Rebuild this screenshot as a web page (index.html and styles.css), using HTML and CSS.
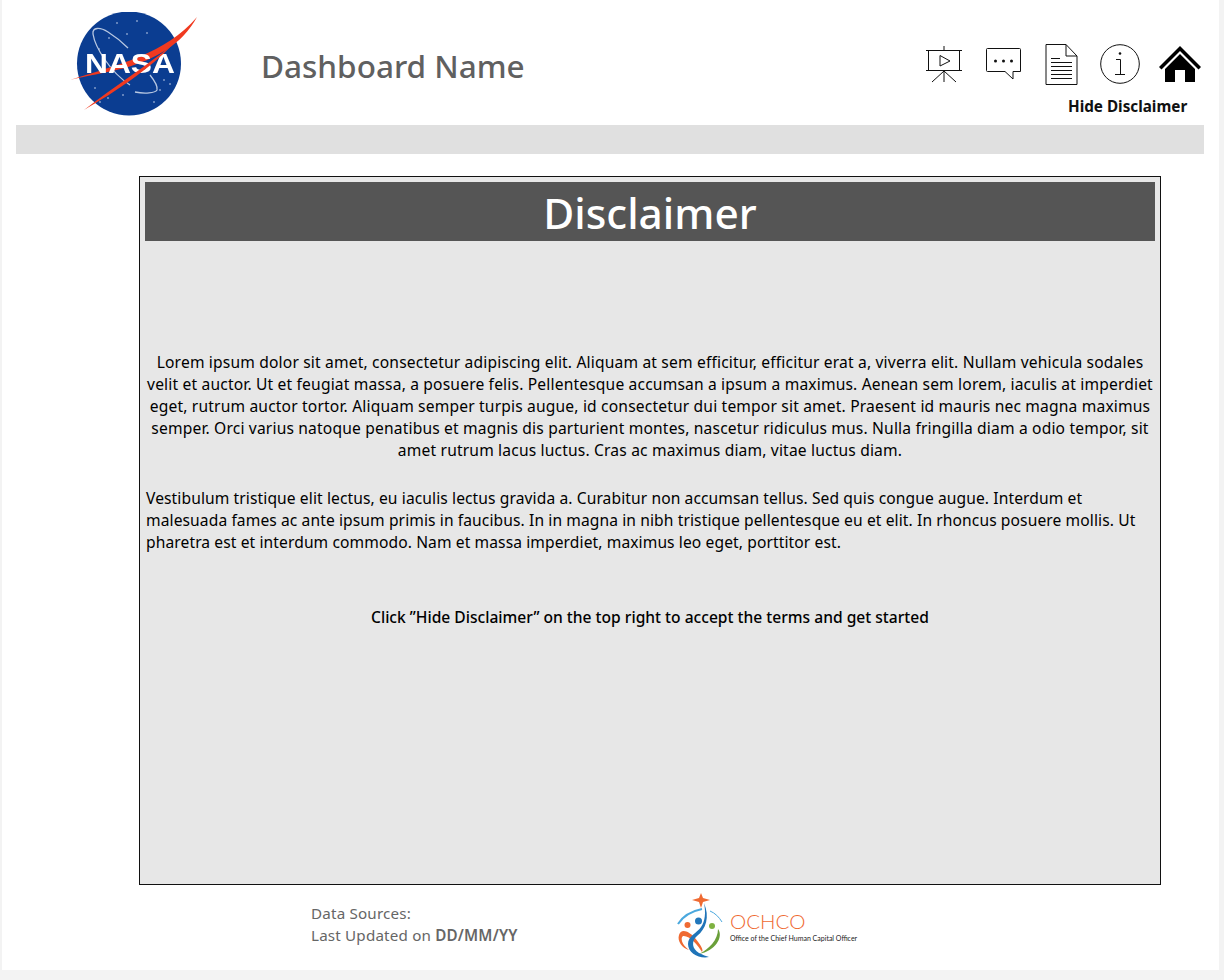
FILE: index.html
```html
<!DOCTYPE html>
<html lang="en">
<head>
  <meta charset="UTF-8">
  <meta name="viewport" content="width=device-width, initial-scale=1.0">
  <title>Dashboard Name</title>
  <link rel="stylesheet" href="styles.css">
</head>
<body>
  <div class="page">
    <header class="header">
      <svg class="nasa-logo" width="128" height="106" viewBox="0 0 128 106">
        <circle cx="59" cy="51.500" r="52" fill="#0b3d91"/>
        <g fill="#7f9aca">
          <circle cx="47" cy="11" r="1"/><circle cx="57" cy="22" r="1"/><circle cx="67" cy="9" r="1"/>
          <circle cx="77" cy="21" r="1"/><circle cx="39" cy="26" r="1"/><circle cx="29" cy="37" r="1"/>
          <circle cx="25" cy="76" r="1"/><circle cx="30" cy="90" r="1"/><circle cx="53" cy="83" r="1"/>
          <circle cx="94" cy="68" r="1"/><circle cx="100" cy="72" r="1"/><circle cx="84" cy="90" r="1"/>
          <circle cx="38" cy="86" r="1"/><circle cx="90" cy="78" r="1"/>
        </g>
        <path d="M60 73C40 60 25 35 23 22C22 15 30 15 38 20C46 25 52 30 58 36" fill="none" stroke="#b8c8e2" stroke-width="1.300"/>
        <path d="M65 80C75 82 85 81 87 78C88 74 84 68 80 63" fill="none" stroke="#b8c8e2" stroke-width="1.300"/>
        <path d="M0 68C50 52 95 42 127 5C112 33 85 47 55 56C35 61 15 64 0 68Z" fill="#f0391f"/>
        <text class="nasa-text" x="15" y="61" textLength="90" lengthAdjust="spacingAndGlyphs">NASA</text>
        <path d="M14 98C45 74 75 55 102 33C80 57 45 80 14 98Z" fill="#f0391f"/>
      </svg>
      <h1 class="dash-title">Dashboard Name</h1>
      <div class="header-right">
        <div class="icon-row">
          <svg class="icon-slides" width="38" height="38" viewBox="0 0 38 38" fill="none" stroke="#111" stroke-width="1">
            <path d="M1 5.500H37M3.500 5.500V25.500H34.500V5.500M1 25.500H37M19 1V5.500M19 25.500V37M19 26L7 37M19 26L31 37"/>
            <path d="M15 10.500L25 16 15 21Z"/>
          </svg>
          <svg class="icon-chat" width="37" height="32" viewBox="0 0 37 32" fill="none" stroke="#111" stroke-width="1">
            <path d="M2.500 .5H34.500Q35.500 .5 35.500 1.500V23.500H28V31L20 23.500H2.500Q1.500 23.500 1.500 22.500V1.500Q1.500 .5 2.500 .5Z"/>
            <g fill="#111" stroke="none"><circle cx="10.500" cy="13" r="1.500"/><circle cx="18.500" cy="13" r="1.500"/><circle cx="26.500" cy="13" r="1.500"/></g>
          </svg>
          <svg class="icon-doc" width="33" height="41" viewBox="0 0 33 41" fill="none" stroke="#111" stroke-width="1">
            <path d="M1 .5H21L32 12V40.500H1ZM21 .5V12H32"/>
            <path d="M6 14.500H15M6 18.500H27M6 22.500H27M6 26.500H27M6 30.500H27M6 34.500H27"/>
          </svg>
          <svg class="icon-info" width="40" height="40" viewBox="0 0 40 40" fill="none" stroke="#111" stroke-width="1">
            <circle cx="20" cy="20" r="19.300"/>
            <path d="M16 15.500H20.500V30M15 30.500H25"/>
            <circle cx="20" cy="9.500" r="1.300" fill="#111" stroke="none"/>
          </svg>
          <svg class="icon-home" width="42" height="37" viewBox="0 0 42 37">
            <path d="M21 0L42 21 39.500 23.500 21 5 2.500 23.500 0 21Z" fill="#000"/>
            <path d="M21 8L36 23V36H26V24H16V36H6V23Z" fill="#000"/>
          </svg>
        </div>
        <div class="hide-link">Hide Disclaimer</div>
      </div>
    </header>
    <div class="gray-bar"></div>

    <main class="panel">
      <h2 class="panel-title">Disclaimer</h2>
      <p class="lorem-center">Lorem ipsum dolor sit amet, consectetur adipiscing elit. Aliquam at sem efficitur, efficitur erat a, viverra elit. Nullam vehicula sodales velit et auctor. Ut et feugiat massa, a posuere felis. Pellentesque accumsan a ipsum a maximus. Aenean sem lorem, iaculis at imperdiet eget, rutrum auctor tortor. Aliquam semper turpis augue, id consectetur dui tempor sit amet. Praesent id mauris nec magna maximus semper. Orci varius natoque penatibus et magnis dis parturient montes, nascetur ridiculus mus. Nulla fringilla diam a odio tempor, sit amet rutrum lacus luctus. Cras ac maximus diam, vitae luctus diam.</p>
      <p class="lorem-left">Vestibulum tristique elit lectus, eu iaculis lectus gravida a. Curabitur non accumsan tellus. Sed quis congue augue. Interdum et malesuada fames ac ante ipsum primis in faucibus. In in magna in nibh tristique pellentesque eu et elit. In rhoncus posuere mollis. Ut pharetra est et interdum commodo. Nam et massa imperdiet, maximus leo eget, porttitor est.</p>
      <p class="callout">Click ”Hide Disclaimer” on the top right to accept the terms and get started</p>
    </main>

    <footer class="footer">
      <div class="sources">
        <div>Data Sources:</div>
        <div>Last Updated on <b>DD/MM/YY</b></div>
      </div>
      <div class="ochco">
        <svg width="50" height="66" viewBox="0 0 50 66" fill="none">
          <path d="M24 0L26 5 33 7 26 9 24 15 22 9 15 7 22 5Z" fill="#ef6a32"/>
          <path d="M1 31C6 23 15 18 25 16" stroke="#4aa8de" stroke-width="2"/>
          <path d="M33 18C38 20 42 24 45 29" stroke="#4aa8de" stroke-width="1"/>
          <circle cx="10.500" cy="32" r="3" fill="#ef6a32"/>
          <circle cx="21.500" cy="28" r="3.500" fill="#2277bb"/>
          <circle cx="35" cy="33" r="3" fill="#7fb241"/>
          <path d="M2 42C4 35 12 38 18 45C23 51 27 57 25 59C21 52 12 42 6 43C3 45 5 52 12 57C5 55 0 48 2 42Z" fill="#ef6a32"/>
          <path d="M41 36C47 44 38 58 22 61C32 56 41 47 41 36Z" fill="#6a9f3a"/>
          <path d="M27 10C33 24 29 36 20 43C14 48 15 56 22 60C26 62 29 63 32 64C22 66 11 60 11 51C11 43 20 40 24 34C28 28 29 20 27 10Z" fill="#1f74b8"/>
        </svg>
        <div class="ochco-text">
          <div class="ochco-name">OCHCO</div>
          <div class="ochco-sub">Office of the Chief Human Capital Officer</div>
        </div>
      </div>
    </footer>
  </div>
</body>
</html>
```

FILE: styles.css
```css
html, body {
  margin: 0;
  padding: 0;
}

body {
  background-color: #f3f3f3;
  font-family: "Noto Sans", Arial, sans-serif;
  color: #111;
}

.page {
  width: 1217px;
  height: 970px;
  margin-left: 2px;
  background-color: #fff;
  display: flex;
  flex-direction: column;
  overflow: hidden;
}

.header {
  height: 125px;
  display: flex;
  box-sizing: border-box;
  padding-left: 68px;
  flex-shrink: 0;
}

.nasa-logo {
  margin-top: 12px;
  filter: blur(0.4px);
}

.nasa-text {
  font-family: "Liberation Sans", Arial, sans-serif;
  font-weight: bold;
  font-size: 28px;
  fill: #fff;
}

.dash-title {
  margin: 44px 0 0 63px;
  font-size: 31.5px;
  line-height: 44px;
  font-weight: 500;
  color: #606060;
}

.header-right {
  margin-left: auto;
  width: 294px;
  padding-top: 43px;
  box-sizing: border-box;
}

.icon-row {
  display: flex;
  align-items: center;
  height: 42px;
}

.icon-chat {
  margin-left: 22px;
}

.icon-doc {
  margin-left: 23px;
}

.icon-info {
  margin-left: 22px;
}

.icon-home {
  margin-left: 19px;
}

.hide-link {
  margin-top: 11px;
  margin-left: 143px;
  font-size: 15.25px;
  line-height: 20px;
  font-weight: 700;
  color: #111;
}

.gray-bar {
  height: 29px;
  margin: 0 15px 0 14px;
  background-color: #e0e0e0;
  flex-shrink: 0;
}

.panel {
  width: 1022px;
  height: 709px;
  margin: 22px 0 0 137px;
  padding: 5px 5px 4px;
  box-sizing: border-box;
  border: 1.5px solid #111;
  background-color: #e7e7e7;
  flex-shrink: 0;
}

.panel-title {
  margin: 0;
  height: 59px;
  background-color: #555;
  color: #fff;
  font-size: 42.4px;
  line-height: 62px;
  font-weight: 500;
  text-align: center;
}

.lorem-center,
.lorem-left,
.callout {
  font-size: 15.6px;
  line-height: 22px;
  margin: 0;
  color: #000;
}

.lorem-center {
  margin-top: 110px;
  letter-spacing: 0.17px;
  text-align: center;
}

.lorem-left {
  margin-top: 26px;
  padding-left: 1px;
  letter-spacing: 0.1px;
}

.callout {
  margin-top: 53px;
  text-align: center;
  font-weight: 500;
}

.footer {
  flex: 1;
  display: flex;
  padding-left: 309px;
}

.sources {
  margin-top: 17px;
  width: 366px;
  font-size: 15.2px;
  letter-spacing: 0.18px;
  line-height: 22px;
  color: #666;
}

.sources b {
  font-weight: 600;
}

.ochco {
  margin-top: 8px;
  display: flex;
  align-items: flex-start;
}

.ochco-text {
  margin: 16px 0 0 3px;
  font-family: Lato, Arial, sans-serif;
}

.ochco-name {
  font-size: 20.5px;
  line-height: 25px;
  font-weight: 300;
  color: #ef6a32;
}

.ochco-sub {
  font-size: 7px;
  line-height: 8px;
  white-space: nowrap;
  color: #222;
}
```
